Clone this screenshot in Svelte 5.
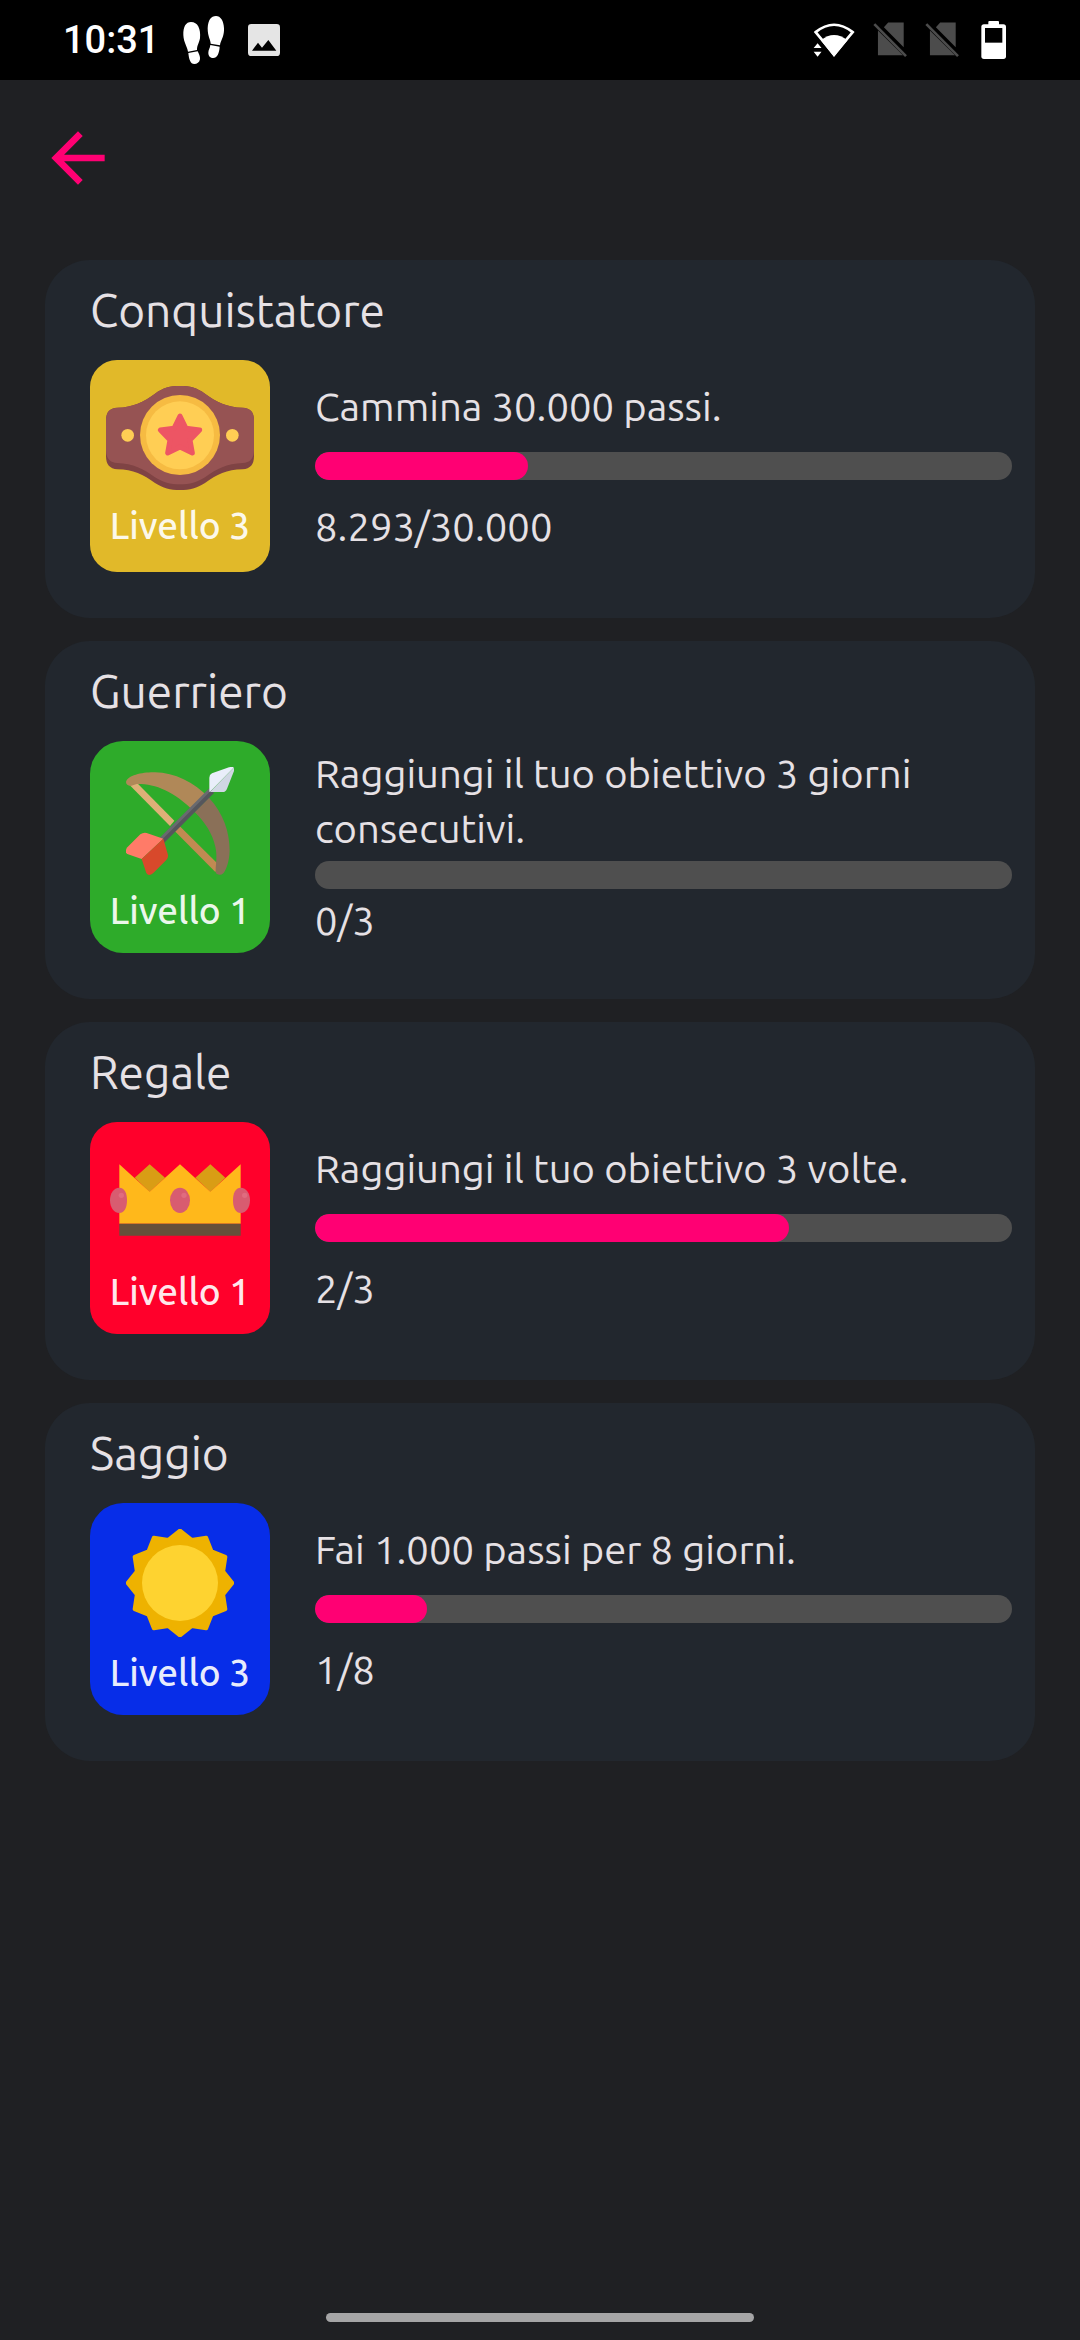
<script>
  const achievements = [
    {
      title: "Conquistatore",
      icon: "belt",
      level: 3,
      color: "gold",
      text: "Cammina 30.000 passi.",
      value: 8293,
      goal: 30000,
    },
    {
      title: "Guerriero",
      icon: "bow",
      level: 1,
      color: "green",
      text: "Raggiungi il tuo obiettivo 3 giorni consecutivi.",
      value: 0,
      goal: 3,
    },
    {
      title: "Regale",
      icon: "crown",
      level: 1,
      color: "red",
      text: "Raggiungi il tuo obiettivo 3 volte.",
      value: 2,
      goal: 3,
    },
    {
      title: "Saggio",
      icon: "sun",
      level: 3,
      color: "blue",
      text: "Fai 1.000 passi per 8 giorni.",
      value: 1,
      goal: 8,
    },
  ];

  //thousands with a dot
  function format(n) {
    return String(n).replace(/\B(?=(\d{3})+$)/g, ".");
  }

  //the round cap is always visible, the rest grows with the progress
  function barWidth(item) {
    return `calc(28px + (100% - 28px) * ${item.value / item.goal})`;
  }

  //12 rays, outer and inner radius alternate
  const sunPoints = Array.from({ length: 24 }, (_, i) => {
    const r = i % 2 ? 134 : 157;
    const a = (i * Math.PI) / 12;
    return `${(r * Math.sin(a)).toFixed(1)},${(-r * Math.cos(a)).toFixed(1)}`;
  }).join(" ");
</script>

<div class="screen">
  <div class="status-bar">
    <div class="status-left">
      <span class="time">10:31</span>
      <svg width="41" height="48" viewBox="546 48 123 144" fill="#fff" aria-hidden="true">
        <path d="M570 66C590 66 600 86 597 115C594 130 588 136 588 150L561 155C559 140 548 128 547 105C546 80 555 66 570 66Z" />
        <path d="M562 159L590 154C594 162 598 170 597 178C595 188 588 192 580 192C568 192 564 178 562 159Z" />
        <path d="M645 48C660 48 670 65 669 92C668 112 658 123 657 136L629 131C629 120 620 110 620 85C621 60 630 48 645 48Z" />
        <path d="M628 135L656 140C655 160 648 174 637 174C628 174 622 168 622 158C622 150 627 145 628 135Z" />
      </svg>
      <svg width="32" height="32" viewBox="738 72 96 96" aria-hidden="true">
        <rect x="738" y="72" width="96" height="96" rx="10" fill="#e5e5e5" />
        <path d="M750 152L768 128L780 143L799 120L823 152Z" fill="#000" />
      </svg>
    </div>
    <div class="status-right">
      <svg width="42" height="36" viewBox="158 66 128 108" aria-hidden="true">
        <path d="M222 164L166 96Q222 51 279 96Z" fill="none" stroke="#fff" stroke-width="8" />
        <path d="M222 172L182 121Q222 88 263 121Z" fill="#fff" />
        <path d="M158 126L172 120L190 142V174H158Z" fill="#000" />
        <path d="M160 144L172 130L184 144ZM160 156L172 171L184 156Z" fill="#fff" />
      </svg>
      {#each [1, 2] as sim}
        <svg width="34" height="36" viewBox="336 72 103 108" aria-hidden="true">
          <path d="M351 97L427 172H351ZM369 87L382 73H429V148Z" fill="#4c4c4c" />
          <path d="M340 78L436 175" stroke="#4c4c4c" stroke-width="8" />
        </svg>
      {/each}
      <svg width="34" height="40" viewBox="651 60 102 120" aria-hidden="true">
        <rect x="664" y="73" width="74" height="104" rx="8" fill="#fff" />
        <rect x="685" y="63" width="32" height="16" rx="3" fill="#fff" />
        <rect x="675" y="84" width="52" height="44" fill="#000" />
      </svg>
    </div>
  </div>

  <header>
    <button type="button" class="back" aria-label="Indietro">
      <svg width="80" height="80" viewBox="0 0 24 24" fill="#ff0073">
        <path d="M20 11H7.83l5.59-5.59L12 4l-8 8 8 8 1.41-1.41L7.83 13H20v-2z" />
      </svg>
    </button>
  </header>

  <main>
    {#each achievements as item}
      <section class="card">
        <h2>{item.title}</h2>
        <div class="row">
          <div class="badge {item.color}">
            {#if item.icon === "belt"}
              <svg width="148" height="104" viewBox="198 407 444 312" aria-hidden="true">
                <path
                  d="M198 510Q198 473 232 472C280 471 310 455 345 430C370 412 390 407 420 407C450 407 470 412 495 430C530 455 560 471 608 472Q642 473 642 510V618Q642 655 608 657C560 658 530 673 495 698C470 714 450 719 420 719C390 719 370 714 345 698C310 673 280 658 232 657Q198 655 198 618Z"
                  fill="#7f4344"
                />
                <path
                  d="M198 510Q198 473 232 472C280 471 310 455 345 430C370 412 390 407 420 407C450 407 470 412 495 430C530 455 560 471 608 472Q642 473 642 510V602Q640 637 608 638C560 640 530 655 495 681C470 697 450 702 420 702C390 702 370 697 345 681C310 655 280 640 232 638Q200 637 198 602Z"
                  fill="#965353"
                />
                <circle cx="420" cy="554" r="120" fill="#f6bb42" />
                <circle cx="420" cy="555" r="102" fill="#ffce54" />
                <circle cx="263" cy="555" r="19" fill="#ffce54" />
                <circle cx="577" cy="555" r="19" fill="#ffce54" />
                <path
                  d="M420 497L438 534L479 539L450 569L457 608L420 590L383 608L390 569L361 539L402 534Z"
                  fill="#ed5564"
                  stroke="#ed5564"
                  stroke-width="15"
                  stroke-linejoin="round"
                />
              </svg>
            {:else if item.icon === "bow"}
              <svg width="108" height="108" viewBox="258 381 324 324" aria-hidden="true">
                <path d="M268 434L292 430L403 542L390 558Z" fill="#deb077" />
                <path d="M418 557L404 573L526 696L540 678Z" fill="#c18a52" />
                <path
                  d="M258 427C262 405 310 396 345 397C405 399 460 425 507 473L464 516C400 452 345 431 290 432L272 438Q259 437 258 427Z"
                  fill="#b08858"
                />
                <path
                  d="M507 473C550 520 569 575 569 632C568 665 558 690 550 700Q540 709 528 700C524 685 534 655 526 620C517 580 496 548 464 516Z"
                  fill="#8a7058"
                />
                <path d="M358 595L508 445L516 453L366 603Z" fill="#696a6f" />
                <path d="M364 601L514 451L522 459L372 609Z" fill="#55565c" />
                <path d="M508 455V413Q508 404 516 400L567 382Q578 378 581 383L510 455Z" fill="#e9eefa" />
                <path d="M581 383Q583 386 582 393L561 446Q557 456 548 456H510Z" fill="#d0d6e4" />
                <path d="M370 596L320 579Q309 577 301 583L262 622Q252 636 264 643L305 657Z" fill="#ff7b68" />
                <path d="M370 596L384 645Q385 653 379 660L340 699Q326 711 319 699L305 657Z" fill="#d8492b" />
              </svg>
            {:else if item.icon === "crown"}
              <svg width="140" height="108" viewBox="210 384 420 324" aria-hidden="true">
                <path d="M284 473L329 433L375 473L329 516ZM466 473L511 433L556 473L511 516Z" fill="#d99d15" />
                <path d="M238 433L329 515L420 433L511 515L602 433V611H238Z" fill="#ffb81b" />
                <path d="M238 611H602V647H238Z" fill="#66503a" />
                <path d="M238 503C254 503 261 520 261 541C261 562 254 579 238 579C221 579 210 562 210 541C210 520 221 503 238 503Z" fill="#d85c70" />
                <ellipse cx="420" cy="541" rx="30" ry="38" fill="#d85c70" />
                <path d="M602 503C586 503 579 520 579 541C579 562 586 579 602 579C619 579 630 562 630 541C630 520 619 503 602 503Z" fill="#d85c70" />
                <g fill="#e06c7f">
                  <circle cx="244" cy="526" r="8" />
                  <circle cx="432" cy="526" r="8" />
                  <circle cx="614" cy="526" r="8" />
                </g>
              </svg>
            {:else}
              <svg width="108" height="108" viewBox="-162 -162 324 324" aria-hidden="true">
                <polygon
                  points={sunPoints}
                  fill="#eeb200"
                  stroke="#eeb200"
                  stroke-width="12"
                  stroke-linejoin="round"
                />
                <circle r="114" fill="#fed330" />
              </svg>
            {/if}
            <span class="level">Livello {item.level}</span>
          </div>
          <div class="info">
            <p>{item.text}</p>
            <div
              class="track"
              role="progressbar"
              aria-label={item.title}
              aria-valuemin="0"
              aria-valuemax={item.goal}
              aria-valuenow={item.value}
            >
              {#if item.value > 0}
                <div class="fill" style="width: {barWidth(item)}"></div>
              {/if}
            </div>
            <p>{format(item.value)}/{format(item.goal)}</p>
          </div>
        </div>
      </section>
    {/each}
  </main>

  <div class="home-bar"></div>
</div>

<style>
  :global(body) {
    margin: 0;
    background: #1f2023;
  }
  .screen {
    display: flex;
    flex-direction: column;
    min-height: 100vh;
    color: #e6e1e5;
    font-family: Ubuntu, "Noto Sans", sans-serif;
  }
  .status-bar {
    display: flex;
    justify-content: space-between;
    align-items: center;
    height: 80px;
    padding: 0 69px 0 63px;
    background: #000;
  }
  .status-left,
  .status-right {
    display: flex;
    align-items: center;
  }
  .status-left {
    gap: 24px;
  }
  .status-right {
    gap: 18px;
  }
  .time {
    color: #fff;
    font-family: Roboto, sans-serif;
    font-size: 38px;
    font-weight: 500;
    line-height: 48px;
  }
  header {
    padding: 38px 38px 62px;
  }
  .back {
    display: block;
    padding: 0;
    border: none;
    background: none;
    cursor: pointer;
  }
  .back svg {
    display: block;
  }
  main {
    display: flex;
    flex-direction: column;
    gap: 23px;
    padding: 0 45px;
  }
  .card {
    padding: 22px 23px 46px 45px;
    border-radius: 45px;
    background: #22272e;
  }
  h2 {
    margin: 0 0 22px;
    font-size: 46px;
    font-weight: 400;
    line-height: 56px;
  }
  .row {
    display: flex;
    gap: 45px;
  }
  .badge {
    display: flex;
    flex-direction: column;
    align-items: center;
    flex: none;
    gap: 12px;
    box-sizing: border-box;
    width: 180px;
    height: 212px;
    padding-top: 26px;
    border-radius: 27px;
  }
  .gold {
    background: #e1b929;
  }
  .green {
    background: #2eab2a;
    border-radius: 33px;
  }
  .red {
    background: #ff002b;
  }
  .blue {
    background: #072de8;
    border-radius: 33px;
  }
  .level {
    color: rgba(255, 255, 255, 0.92);
    font-size: 37px;
    font-weight: 500;
    line-height: 48px;
    white-space: nowrap;
  }
  .info {
    display: flex;
    flex-direction: column;
    justify-content: space-evenly;
    flex: 1;
    min-width: 0;
  }
  p {
    margin: 0;
    font-size: 40px;
    line-height: 55px;
  }
  .track {
    height: 28px;
    overflow: hidden;
    border-radius: 14px;
    background: #4f4f4f;
  }
  .fill {
    height: 100%;
    border-radius: 14px;
    background: #ff0073;
  }
  .home-bar {
    width: 428px;
    max-width: 60%;
    height: 9px;
    margin: auto auto 18px;
    border-radius: 5px;
    background: #a5a5a6;
  }
</style>
